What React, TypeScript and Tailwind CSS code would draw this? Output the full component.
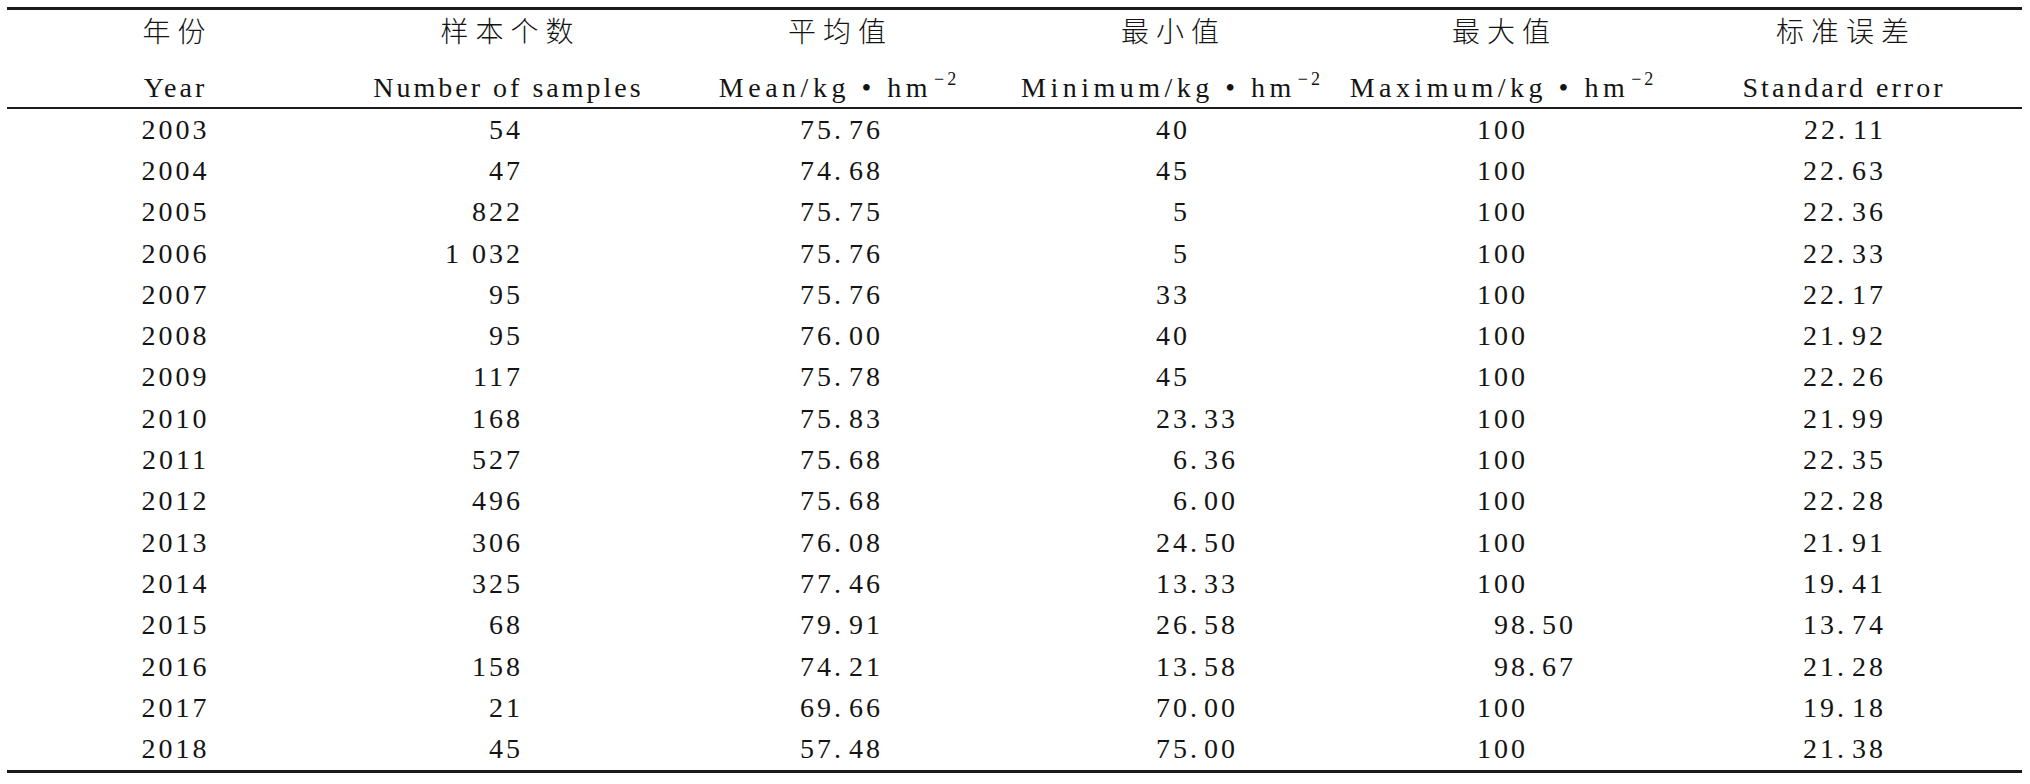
const rows: string[][] = [
  ['2003', '54', '75.76', '40', '100', '22.11'],
  ['2004', '47', '74.68', '45', '100', '22.63'],
  ['2005', '822', '75.75', '5', '100', '22.36'],
  ['2006', '1 032', '75.76', '5', '100', '22.33'],
  ['2007', '95', '75.76', '33', '100', '22.17'],
  ['2008', '95', '76.00', '40', '100', '21.92'],
  ['2009', '117', '75.78', '45', '100', '22.26'],
  ['2010', '168', '75.83', '23.33', '100', '21.99'],
  ['2011', '527', '75.68', '6.36', '100', '22.35'],
  ['2012', '496', '75.68', '6.00', '100', '22.28'],
  ['2013', '306', '76.08', '24.50', '100', '21.91'],
  ['2014', '325', '77.46', '13.33', '100', '19.41'],
  ['2015', '68', '79.91', '26.58', '98.50', '13.74'],
  ['2016', '158', '74.21', '13.58', '98.67', '21.28'],
  ['2017', '21', '69.66', '70.00', '100', '19.18'],
  ['2018', '45', '57.48', '75.00', '100', '21.38'],
];

const headers = [
  { zh: '年份', en: 'Year', unit: false },
  { zh: '样本个数', en: 'Number of samples', unit: false },
  { zh: '平均值', en: 'Mean', unit: true },
  { zh: '最小值', en: 'Minimum', unit: true },
  { zh: '最大值', en: 'Maximum', unit: true },
  { zh: '标准误差', en: 'Standard error', unit: false },
];

const gridCols = 'grid grid-cols-[334px_332px_328px_338px_324px_359px]';

const Num = ({ v }: { v: string }) => {
  const [int, frac] = v.split('.');
  return (
    <>
      {int}
      {frac !== undefined && (
        <>
          <span className="mr-[5px]">.</span>
          {frac}
        </>
      )}
    </>
  );
};

// integer part in a fixed box so the decimal points line up
const Aligned = ({ v, box }: { v: string; box: string }) => {
  const [int, frac] = v.split('.');
  return (
    <div className="flex items-center">
      <span className={`${box} shrink-0 text-right`}>{int}</span>
      {frac !== undefined && (
        <>
          <span className="mr-[4px]">.</span>
          <span>{frac}</span>
        </>
      )}
    </div>
  );
};

const App = () => {
  return (
    <div className="min-h-[784px] w-[2030px] bg-white pt-[7px] font-[Liberation_Serif] text-[28px] text-[#141414] tracking-[3px]">
      <div className="ml-[7px] w-[2015px] border-t-[3px] border-b-[3px] border-[#1a1a1a]">
        <div className={`${gridCols} border-b-2 border-[#1a1a1a]`}>
          {headers.map((h) => (
            <div key={h.zh} className="flex flex-col items-center">
              <div className="flex h-[40px] items-center">
                <span className="pl-[7px] font-['Noto_Sans_CJK_SC'] font-light leading-[28px] tracking-[7px]">
                  {h.zh}
                </span>
              </div>
              <div className="flex h-[57px] items-end pb-[5px]">
                {h.unit ? (
                  <span className="pl-[4px] leading-[28px] tracking-[4.5px] whitespace-nowrap">
                    {`${h.en}/kg • hm`}
                    <span className="ml-[2px] text-[18px] tracking-[3px] align-[12px]">−2</span>
                  </span>
                ) : (
                  <span className="pl-[3px] leading-[28px] whitespace-nowrap">{h.en}</span>
                )}
              </div>
            </div>
          ))}
        </div>

        {rows.map((r) => (
          <div key={r[0]} className={`${gridCols} h-[41.3px] leading-[28px]`}>
            <div className="flex items-center justify-center pl-[3px]">{r[0]}</div>
            <div className="flex items-center justify-end pr-[150px]">{r[1]}</div>
            <div className="flex items-center justify-end pr-[118px]">
              <Num v={r[2]} />
            </div>
            <Aligned v={r[3]} box="w-[189px]" />
            <Aligned v={r[4]} box="w-[189px]" />
            <div className="flex items-center justify-end pr-[136px]">
              <Num v={r[5]} />
            </div>
          </div>
        ))}
      </div>
    </div>
  );
};

export default App;
